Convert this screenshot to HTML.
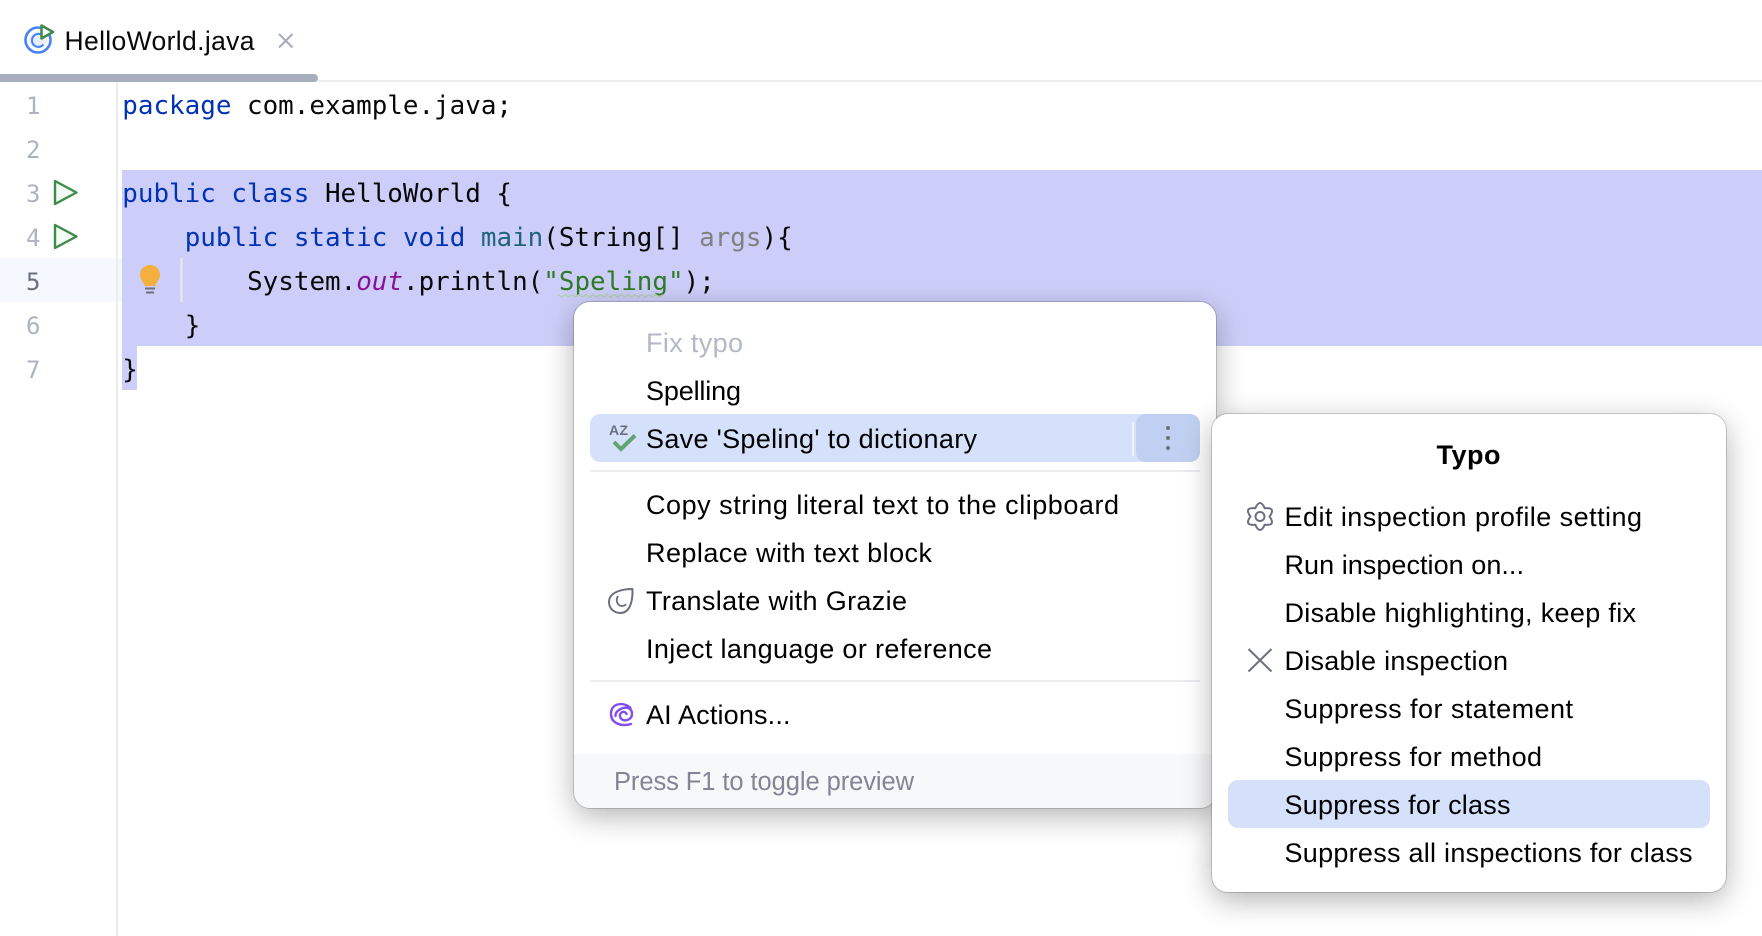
<!DOCTYPE html>
<html><head><meta charset="utf-8"><style>
html,body{margin:0;padding:0;background:#fff;width:1762px;height:936px;overflow:hidden}
svg{display:block}
.m{font-family:"DejaVu Sans Mono","Liberation Mono",monospace;font-size:25.9px;fill:#080808;white-space:pre}
.k{fill:#0033B3}
.u{font-family:"Liberation Sans",Arial,sans-serif;font-size:27px;fill:#000}
.n{font-family:"DejaVu Sans Mono","Liberation Mono",monospace;font-size:24px;fill:#AEB3C2}
</style></head><body>
<svg xmlns="http://www.w3.org/2000/svg" width="1762" height="936" viewBox="0 0 1762 936">
<defs>
<filter id="sh" x="-20%" y="-20%" width="140%" height="150%"><feGaussianBlur in="SourceAlpha" stdDeviation="15"/><feOffset dy="8"/><feComponentTransfer><feFuncA type="linear" slope=".3"/></feComponentTransfer><feMerge><feMergeNode/><feMergeNode in="SourceGraphic"/></feMerge></filter>
<clipPath id="p1"><rect x="574" y="302" width="642" height="506" rx="16"/></clipPath>
</defs>
<rect width="1762" height="936" fill="#fff"/>

<!-- tab -->
<circle cx="38" cy="40" r="12.500" fill="#fff" stroke="#4682FA" stroke-width="2.600"/>
<circle cx="38" cy="40" r="8.500" fill="#E7EFFD"/>
<path d="M43.500 44.500A6.500 6.500 0 1 1 42 35" fill="none" stroke="#4682FA" stroke-width="2"/>
<path d="M41.500 25.500L53 32 41.500 38.500Z" fill="#fff" stroke="#3E8A4A" stroke-width="2.500" stroke-linejoin="round"/>
<text class="u" x="64.500" y="50" textLength="190" lengthAdjust="spacing" style="font-size:26.500px;fill:#0a0a0a">HelloWorld.java</text>
<path d="M279 34L292.500 47.500M292.500 34L279 47.500" stroke="#A8ADBD" stroke-width="2" fill="none"/>
<rect x="0" y="80" width="1762" height="2" fill="#EBECF0"/>
<path d="M0 74H314a4 4 0 0 1 0 8H0Z" fill="#A8ADBD"/>

<!-- gutter -->
<rect x="0" y="258" width="122" height="44" fill="#F5F8FE"/>
<rect x="116" y="82" width="2" height="854" fill="#EBECF0"/>

<!-- selection -->
<rect x="122" y="170" width="1640" height="176" fill="#CCCEF9"/>
<rect x="122" y="346" width="15" height="44" fill="#CCCEF9"/>
<rect x="180.500" y="258" width="2" height="44" fill="#E9E9F4"/>

<!-- numbers -->
<text class="n" x="26" y="114">1</text>
<text class="n" x="26" y="158">2</text>
<text class="n" x="26" y="202">3</text>
<text class="n" x="26" y="246">4</text>
<text class="n" x="26" y="290" style="fill:#6C707E">5</text>
<text class="n" x="26" y="334">6</text>
<text class="n" x="26" y="378">7</text>

<!-- run icons -->
<path d="M55 181L76.500 192.500 55 204Z" fill="#F2FCF3" stroke="#3E8A4A" stroke-width="2.400" stroke-linejoin="round"/>
<path d="M55 225L76.500 236.500 55 248Z" fill="#F2FCF3" stroke="#3E8A4A" stroke-width="2.400" stroke-linejoin="round"/>

<!-- bulb -->
<path d="M150 265a10 10 0 0 1 10 10c0 5-3.500 7-5 11h-10c-1.500-4-5-6-5-11a10 10 0 0 1 10-10Z" fill="#F4AF3D"/>
<rect x="145" y="287.500" width="10" height="2" fill="#6C707E"/>
<rect x="146" y="291.500" width="8" height="2" fill="#6C707E"/>

<!-- code -->
<text class="m" x="122.300" y="114"><tspan class="k">package</tspan> com.example.java;</text>
<text class="m" x="122.300" y="202"><tspan class="k">public</tspan> <tspan class="k">class</tspan> HelloWorld {</text>
<text class="m" x="184.700" y="246"><tspan class="k">public</tspan> <tspan class="k">static</tspan> <tspan class="k">void</tspan> <tspan fill="#1F6479">main</tspan>(String[] <tspan fill="#808080">args</tspan>){</text>
<text class="m" x="247.100" y="290">System.<tspan fill="#871094" font-style="italic">out</tspan>.println(<tspan fill="#2F7A26">"Speling"</tspan>);</text>
<text class="m" x="184.700" y="334">}</text>
<text class="m" x="122.300" y="378">}</text>
<path d="M558 294.500l3.500 2.500 3.500-2.500 3.500 2.500 3.500-2.500 3.500 2.500 3.500-2.500 3.500 2.500 3.500-2.500 3.500 2.500 3.500-2.500 3.500 2.500 3.500-2.500 3.500 2.500 3.500-2.500 3.500 2.500 3.500-2.500 3.500 2.500 3.500-2.500 3.500 2.500 3.500-2.500 3.500 2.500 3.500-2.500 3.500 2.500 3.500-2.500 3.500 2.500 3.500-2.500 3.500 2.500 3.500-2.500 3.500 2.500 3.500-2.500" fill="none" stroke="#B2D0A8" stroke-width="1.300"/>

<!-- popup 1 -->
<g filter="url(#sh)"><rect x="574" y="302" width="642" height="506" rx="16" fill="#fff"/></g>
<rect x="574" y="754" width="642" height="54" fill="#F7F8FA" clip-path="url(#p1)"/>
<rect x="573.500" y="301.500" width="643" height="507" rx="16.500" fill="none" stroke="#000" stroke-opacity=".17"/>

<text class="u" x="646" y="352" textLength="97" lengthAdjust="spacing" style="fill:#B4B8C6">Fix typo</text>
<text class="u" x="646" y="400" textLength="95" lengthAdjust="spacing">Spelling</text>
<rect x="590" y="414" width="610" height="48" rx="10" fill="#D5E1FA"/>
<path d="M1146 414H1190a10 10 0 0 1 10 10V452a10 10 0 0 1-10 10H1146a10 10 0 0 1-10-10V424a10 10 0 0 1 10-10Z" fill="#C0D0F2"/>
<rect x="1132" y="422" width="2" height="34" fill="#F1F4FD"/>
<circle cx="1168" cy="428" r="2" fill="#6C707E"/><circle cx="1168" cy="438" r="2" fill="#6C707E"/><circle cx="1168" cy="448" r="2" fill="#6C707E"/>
<text x="609" y="435" style="font-family:'Liberation Sans',sans-serif;font-size:14px;font-weight:700;fill:#6C707E" textLength="19" lengthAdjust="spacing">AZ</text>
<path d="M614 442L621 449 635 435.500" fill="none" stroke="#5FA56F" stroke-width="4"/>
<text class="u" x="646" y="448" textLength="331" lengthAdjust="spacing">Save 'Speling' to dictionary</text>
<rect x="590" y="470" width="610" height="2" fill="#EBECF0"/>
<text class="u" x="646" y="514" textLength="473" lengthAdjust="spacing">Copy string literal text to the clipboard</text>
<text class="u" x="646" y="562" textLength="286" lengthAdjust="spacing">Replace with text block</text>
<path d="M632.500 589C622 589 609 592 609 602C609 608.500 614 613 620.500 613C628 613 633 605 632.500 589Z" fill="none" stroke="#6C707E" stroke-width="2" stroke-linejoin="round"/>
<path d="M618 596c-3 5 0 10 4 10 2 0 3.500-1 4-2" fill="none" stroke="#6C707E" stroke-width="1.800"/>
<text class="u" x="646" y="610" textLength="261" lengthAdjust="spacing">Translate with Grazie</text>
<text class="u" x="646" y="658" textLength="346" lengthAdjust="spacing">Inject language or reference</text>
<rect x="590" y="680" width="610" height="2" fill="#EBECF0"/>
<g fill="none" stroke="#834DF0" stroke-width="2.400" stroke-linecap="round">
<path d="M630.500 708C625 702 611 702 611 714C611 723 621 727 631 724"/>
<path d="M615.500 716C615 708 632 703 632 714C632 721 621 723 620 716C619.500 712 625 710 626.500 714"/>
</g>
<text class="u" x="646" y="724" textLength="144.500" lengthAdjust="spacing">AI Actions...</text>
<text class="u" x="614" y="790" textLength="300" lengthAdjust="spacing" style="fill:#818594;font-size:25.500px">Press F1 to toggle preview</text>

<!-- popup 2 -->
<g filter="url(#sh)"><rect x="1212" y="414" width="514" height="478" rx="16" fill="#fff"/></g>
<rect x="1211.500" y="413.500" width="515" height="479" rx="16.500" fill="none" stroke="#000" stroke-opacity=".17"/>
<text class="u" x="1436.500" y="464" textLength="64" lengthAdjust="spacing" style="font-weight:700">Typo</text>
<g fill="none" stroke="#6C707E" stroke-width="2" stroke-linejoin="round">
<path d="M1264.750 508.300Q1260 497.700 1255.250 508.300Q1243.700 507.100 1250.500 516.500Q1243.700 525.900 1255.250 524.700Q1260 535.300 1264.750 524.700Q1276.300 525.900 1269.500 516.500Q1276.300 507.100 1264.750 508.300Z"/>
<circle cx="1260" cy="516.500" r="4.500"/>
<path d="M1248.500 649L1271.500 671.500M1271.500 649L1248.500 671.500"/>
</g>
<text class="u" x="1284.500" y="526" textLength="357.500" lengthAdjust="spacing">Edit inspection profile setting</text>
<text class="u" x="1284.500" y="574" textLength="239.500" lengthAdjust="spacing">Run inspection on...</text>
<text class="u" x="1284.500" y="622" textLength="351.500" lengthAdjust="spacing">Disable highlighting, keep fix</text>
<text class="u" x="1284.500" y="670" textLength="223.500" lengthAdjust="spacing">Disable inspection</text>
<text class="u" x="1284.500" y="718" textLength="288.500" lengthAdjust="spacing">Suppress for statement</text>
<text class="u" x="1284.500" y="766" textLength="257.500" lengthAdjust="spacing">Suppress for method</text>
<rect x="1228" y="780" width="482" height="48" rx="10" fill="#D5E1FA"/>
<text class="u" x="1284.500" y="814" textLength="226" lengthAdjust="spacing">Suppress for class</text>
<text class="u" x="1284.500" y="862" textLength="408" lengthAdjust="spacing">Suppress all inspections for class</text>
</svg>
</body></html>
